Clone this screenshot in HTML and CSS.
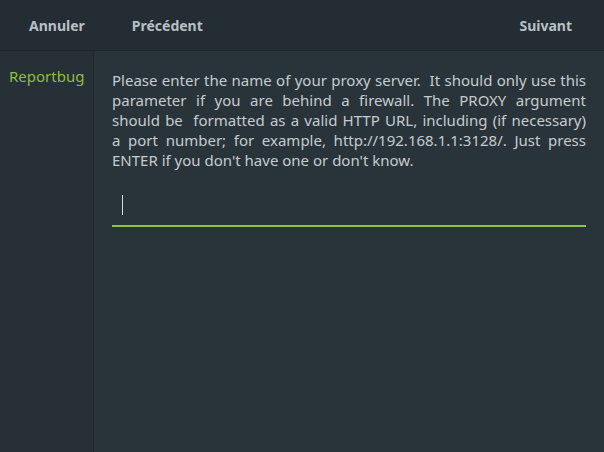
FILE: index.html
```html
<!DOCTYPE html>
<html lang="fr">
<head>
    <meta charset="UTF-8">
    <title>Reportbug</title>
    <link rel="stylesheet" href="styles.css">
</head>
<body>
    <header class="headerbar">
        <button class="nav-button">Annuler</button>
        <button class="nav-button">Précédent</button>
        <span class="spacer"></span>
        <button class="nav-button">Suivant</button>
    </header>
    <div class="main">
        <aside class="sidebar">
            <div class="sidebar-item">Reportbug</div>
        </aside>
        <section class="content">
            <!-- one span per wrapped line, so the breaks stay where GTK put them -->
            <p class="prompt">
                <span class="line">Please enter the name of your proxy server.&nbsp; It should only use this</span>
                <span class="line">parameter if you are behind a firewall. The PROXY argument</span>
                <span class="line">should be &nbsp;formatted as a valid HTTP URL, including (if necessary)</span>
                <span class="line">a port number; for example, http://192.168.1.1:3128/. Just press</span>
                <span class="line last">ENTER if you don't have one or don't know.</span>
            </p>
            <div class="entry">
                <span class="caret"></span>
            </div>
        </section>
    </div>
</body>
</html>
```

FILE: styles.css
```css
html, body {
    height: 100%;
}
body {
    margin: 0;
    font-family: "Noto Sans", "Open Sans", sans-serif;
    font-size: 14px;
    color: #c5cacd;
    background-color: #29343a;
    display: flex;
    flex-direction: column;
    overflow: hidden;
}
.headerbar {
    height: 50px;
    flex-shrink: 0;
    display: flex;
    align-items: center;
    padding: 0 22px 0 18px;
    background-color: #242d33;
    border-bottom: 1px solid #1e262b;
}
.nav-button {
    background: none;
    border: none;
    font-family: inherit;
    font-size: 14px;
    font-weight: bold;
    color: #b9c0c4;
    padding: 6px 11px;
    margin-right: 25px;
}
.nav-button:last-child {
    margin-right: 0;
    padding-right: 10px;
}
.spacer {
    flex: 1;
}
.main {
    flex: 1;
    display: flex;
}
.sidebar {
    width: 93px;
    flex-shrink: 0;
    background-color: #263036;
    border-right: 1px solid #20292e;
}
.sidebar-item {
    color: #8bbf3f;
    font-size: 15px;
    padding: 15px 9px;
}
.content {
    flex: 1;
    padding: 19px 18px 0 18px;
}
.prompt {
    margin: 0;
    font-size: 15px;
    line-height: 20px;
    color: #c6cbce;
}
.line {
    display: block;
    text-align: justify;
    text-align-last: justify;
}
.line.last {
    text-align-last: left;
}
.entry {
    margin-top: 22px;
    height: 33px;
    border-bottom: 2px solid #8bc34a;
    padding-left: 10px;
    display: flex;
    align-items: center;
}
.caret {
    width: 1px;
    height: 20px;
    margin-top: -8px;
    background-color: #d5dadc;
}
```
